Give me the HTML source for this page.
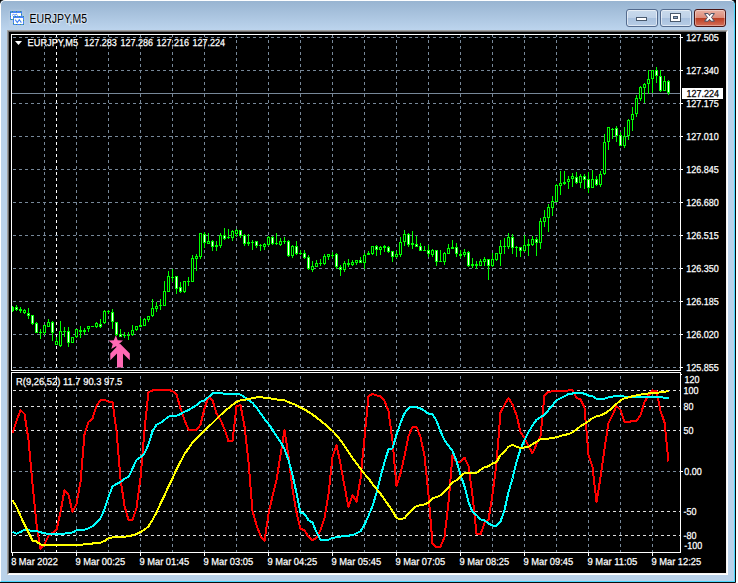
<!DOCTYPE html>
<html><head><meta charset="utf-8"><title>EURJPY,M5</title>
<style>
html,body{margin:0;padding:0;background:#fff;}
body{width:738px;height:583px;overflow:hidden;position:relative;font-family:"Liberation Sans",sans-serif;}
#win{position:absolute;left:-1px;top:-1px;width:735px;height:582px;border:1px solid #0c0c0c;border-radius:6px 6px 0 0;background:#bad2ea;overflow:hidden;}
#hl{position:absolute;left:0;top:0;right:0;bottom:0;border:1px solid #4cd8ff;border-left-color:#ffffff;border-top-color:#fdfeff;border-radius:5px 5px 0 0;}
#tb{position:absolute;left:1px;top:1px;right:1px;height:29px;background:linear-gradient(#98b4d1,#bcd4ed);}
.btn{position:absolute;top:9px;width:30px;height:16px;border:1px solid #546b8e;border-radius:3px;box-shadow:inset 0 0 0 1px rgba(255,255,255,.55);background:linear-gradient(#c9daec 0,#bfd2e8 48%,#a9c1de 52%,#b7cde6 100%);}
#bc{border-color:#4a1515;background:linear-gradient(#e9b0a2 0,#dc8c7a 48%,#bb3d22 52%,#d4705a 100%);box-shadow:inset 0 0 0 1px rgba(255,255,255,.35);}
#client{position:absolute;left:7px;top:30px;width:719px;height:543px;border:1px solid;border-color:#a0a0a0 #fff #fff #a0a0a0;background:#000;}
#client i{position:absolute;left:0;top:0;right:0;bottom:0;border:1px solid;border-color:#696969 #f4f4f4 #f4f4f4 #696969;}
svg{position:absolute;left:0;top:0;}
</style></head><body>
<div style="position:absolute;left:0;top:0;width:736px;height:8px;background:#000"></div>
<div id="win"><div id="tb"></div><div id="hl"></div>
<div class="btn" style="left:626px"></div><div class="btn" style="left:660px"></div><div class="btn" id="bc" style="left:694px"></div>
</div>
<div id="client" style="left:7px;top:30px;position:absolute"><i></i></div>
<svg width="738" height="583" viewBox="0 0 738 583">
<!-- title icon -->
<rect x="8.5" y="9.5" width="17" height="17" rx="3" fill="#fff" opacity="0.08"/>
<g shape-rendering="crispEdges">
<rect x="10.5" y="11.5" width="11" height="8" fill="#fffffa" stroke="#4784f6"/>
<rect x="11" y="12" width="10" height="1" fill="#4784f6"/>
<rect x="10.5" y="11.5" width="11" height="8" fill="none" stroke="#3c9a6e" stroke-dasharray="1 3" stroke-dashoffset="-1"/>
<rect x="13.5" y="16.5" width="10" height="8" fill="#fffffa" stroke="#4784f6"/>
<rect x="14" y="17" width="9" height="1" fill="#4784f6"/>
<rect x="13.5" y="16.5" width="10" height="8" fill="none" stroke="#3c9a6e" stroke-dasharray="1 3" stroke-dashoffset="-1"/>
</g>
<polyline points="12.2,15.2 13.5,14.4 15,15.3 16.2,14.2 17.6,15.4" fill="none" stroke="#4784f6" stroke-width="1"/>
<polyline points="15.2,19.6 17.3,22.6 19.3,19.6 21.4,22.6" fill="none" stroke="#4784f6" stroke-width="1.1"/>
<text x="29.6" y="23.2" font-family="'Liberation Sans', sans-serif" font-size="12.3" fill="#000" textLength="57.4" lengthAdjust="spacingAndGlyphs" style="paint-order:stroke;stroke:rgba(255,255,255,.35);stroke-width:2.5px">EURJPY,M5</text>
<!-- caption button glyphs -->
<g shape-rendering="crispEdges">
<rect x="636.5" y="17.5" width="10" height="3" fill="#fff" stroke="#4a5a6e"/>
<rect x="670.5" y="13.5" width="10" height="8" fill="#fff" stroke="#4a5a6e"/>
<rect x="673.5" y="16.5" width="4" height="2" fill="#8fa6c4" stroke="#4a5a6e"/>
</g>
<path d="M704.6 13.6 L708.2 13.6 L709.5 15.6 L710.8 13.6 L714.4 13.6 L711.5 17.4 L714.4 21.2 L710.8 21.2 L709.5 19.2 L708.2 21.2 L704.6 21.2 L707.5 17.4 Z" fill="#fff" stroke="#474b5e" stroke-width="1" stroke-linejoin="round"/>
<g shape-rendering="crispEdges" stroke-width="1" fill="none">
<line x1="13" y1="37.5" x2="680" y2="37.5" stroke="#778899" stroke-dasharray="3 3" stroke-dashoffset="0"/>
<line x1="13" y1="70.5" x2="680" y2="70.5" stroke="#778899" stroke-dasharray="3 3" stroke-dashoffset="0"/>
<line x1="13" y1="103.5" x2="680" y2="103.5" stroke="#778899" stroke-dasharray="3 3" stroke-dashoffset="0"/>
<line x1="13" y1="136.5" x2="680" y2="136.5" stroke="#778899" stroke-dasharray="3 3" stroke-dashoffset="0"/>
<line x1="13" y1="169.5" x2="680" y2="169.5" stroke="#778899" stroke-dasharray="3 3" stroke-dashoffset="0"/>
<line x1="13" y1="202.5" x2="680" y2="202.5" stroke="#778899" stroke-dasharray="3 3" stroke-dashoffset="0"/>
<line x1="13" y1="235.5" x2="680" y2="235.5" stroke="#778899" stroke-dasharray="3 3" stroke-dashoffset="0"/>
<line x1="13" y1="268.5" x2="680" y2="268.5" stroke="#778899" stroke-dasharray="3 3" stroke-dashoffset="0"/>
<line x1="13" y1="301.5" x2="680" y2="301.5" stroke="#778899" stroke-dasharray="3 3" stroke-dashoffset="0"/>
<line x1="13" y1="334.5" x2="680" y2="334.5" stroke="#778899" stroke-dasharray="3 3" stroke-dashoffset="0"/>
<line x1="13" y1="367.5" x2="680" y2="367.5" stroke="#778899" stroke-dasharray="3 3" stroke-dashoffset="0"/>
<line x1="44.5" y1="35" x2="44.5" y2="370" stroke="#778899" stroke-dasharray="3 3" stroke-dashoffset="1"/>
<line x1="44.5" y1="373" x2="44.5" y2="552" stroke="#778899" stroke-dasharray="3 3" stroke-dashoffset="3"/>
<line x1="76.5" y1="35" x2="76.5" y2="370" stroke="#778899" stroke-dasharray="3 3" stroke-dashoffset="1"/>
<line x1="76.5" y1="373" x2="76.5" y2="552" stroke="#778899" stroke-dasharray="3 3" stroke-dashoffset="3"/>
<line x1="108.5" y1="35" x2="108.5" y2="370" stroke="#778899" stroke-dasharray="3 3" stroke-dashoffset="1"/>
<line x1="108.5" y1="373" x2="108.5" y2="552" stroke="#778899" stroke-dasharray="3 3" stroke-dashoffset="3"/>
<line x1="140.5" y1="35" x2="140.5" y2="370" stroke="#778899" stroke-dasharray="3 3" stroke-dashoffset="1"/>
<line x1="140.5" y1="373" x2="140.5" y2="552" stroke="#778899" stroke-dasharray="3 3" stroke-dashoffset="3"/>
<line x1="172.5" y1="35" x2="172.5" y2="370" stroke="#778899" stroke-dasharray="3 3" stroke-dashoffset="1"/>
<line x1="172.5" y1="373" x2="172.5" y2="552" stroke="#778899" stroke-dasharray="3 3" stroke-dashoffset="3"/>
<line x1="204.5" y1="35" x2="204.5" y2="370" stroke="#778899" stroke-dasharray="3 3" stroke-dashoffset="1"/>
<line x1="204.5" y1="373" x2="204.5" y2="552" stroke="#778899" stroke-dasharray="3 3" stroke-dashoffset="3"/>
<line x1="236.5" y1="35" x2="236.5" y2="370" stroke="#778899" stroke-dasharray="3 3" stroke-dashoffset="1"/>
<line x1="236.5" y1="373" x2="236.5" y2="552" stroke="#778899" stroke-dasharray="3 3" stroke-dashoffset="3"/>
<line x1="268.5" y1="35" x2="268.5" y2="370" stroke="#778899" stroke-dasharray="3 3" stroke-dashoffset="1"/>
<line x1="268.5" y1="373" x2="268.5" y2="552" stroke="#778899" stroke-dasharray="3 3" stroke-dashoffset="3"/>
<line x1="300.5" y1="35" x2="300.5" y2="370" stroke="#778899" stroke-dasharray="3 3" stroke-dashoffset="1"/>
<line x1="300.5" y1="373" x2="300.5" y2="552" stroke="#778899" stroke-dasharray="3 3" stroke-dashoffset="3"/>
<line x1="332.5" y1="35" x2="332.5" y2="370" stroke="#778899" stroke-dasharray="3 3" stroke-dashoffset="1"/>
<line x1="332.5" y1="373" x2="332.5" y2="552" stroke="#778899" stroke-dasharray="3 3" stroke-dashoffset="3"/>
<line x1="364.5" y1="35" x2="364.5" y2="370" stroke="#778899" stroke-dasharray="3 3" stroke-dashoffset="1"/>
<line x1="364.5" y1="373" x2="364.5" y2="552" stroke="#778899" stroke-dasharray="3 3" stroke-dashoffset="3"/>
<line x1="396.5" y1="35" x2="396.5" y2="370" stroke="#778899" stroke-dasharray="3 3" stroke-dashoffset="1"/>
<line x1="396.5" y1="373" x2="396.5" y2="552" stroke="#778899" stroke-dasharray="3 3" stroke-dashoffset="3"/>
<line x1="428.5" y1="35" x2="428.5" y2="370" stroke="#778899" stroke-dasharray="3 3" stroke-dashoffset="1"/>
<line x1="428.5" y1="373" x2="428.5" y2="552" stroke="#778899" stroke-dasharray="3 3" stroke-dashoffset="3"/>
<line x1="460.5" y1="35" x2="460.5" y2="370" stroke="#778899" stroke-dasharray="3 3" stroke-dashoffset="1"/>
<line x1="460.5" y1="373" x2="460.5" y2="552" stroke="#778899" stroke-dasharray="3 3" stroke-dashoffset="3"/>
<line x1="492.5" y1="35" x2="492.5" y2="370" stroke="#778899" stroke-dasharray="3 3" stroke-dashoffset="1"/>
<line x1="492.5" y1="373" x2="492.5" y2="552" stroke="#778899" stroke-dasharray="3 3" stroke-dashoffset="3"/>
<line x1="524.5" y1="35" x2="524.5" y2="370" stroke="#778899" stroke-dasharray="3 3" stroke-dashoffset="1"/>
<line x1="524.5" y1="373" x2="524.5" y2="552" stroke="#778899" stroke-dasharray="3 3" stroke-dashoffset="3"/>
<line x1="556.5" y1="35" x2="556.5" y2="370" stroke="#778899" stroke-dasharray="3 3" stroke-dashoffset="1"/>
<line x1="556.5" y1="373" x2="556.5" y2="552" stroke="#778899" stroke-dasharray="3 3" stroke-dashoffset="3"/>
<line x1="588.5" y1="35" x2="588.5" y2="370" stroke="#778899" stroke-dasharray="3 3" stroke-dashoffset="1"/>
<line x1="588.5" y1="373" x2="588.5" y2="552" stroke="#778899" stroke-dasharray="3 3" stroke-dashoffset="3"/>
<line x1="620.5" y1="35" x2="620.5" y2="370" stroke="#778899" stroke-dasharray="3 3" stroke-dashoffset="1"/>
<line x1="620.5" y1="373" x2="620.5" y2="552" stroke="#778899" stroke-dasharray="3 3" stroke-dashoffset="3"/>
<line x1="652.5" y1="35" x2="652.5" y2="370" stroke="#778899" stroke-dasharray="3 3" stroke-dashoffset="1"/>
<line x1="652.5" y1="373" x2="652.5" y2="552" stroke="#778899" stroke-dasharray="3 3" stroke-dashoffset="3"/>
<line x1="56.5" y1="35" x2="56.5" y2="370" stroke="#ffffff" stroke-dasharray="3 3" stroke-dashoffset="1"/>
<line x1="56.5" y1="373" x2="56.5" y2="552" stroke="#ffffff" stroke-dasharray="3 3" stroke-dashoffset="3"/>
<line x1="13" y1="390.5" x2="680" y2="390.5" stroke="#dedede" stroke-dasharray="3 3" stroke-dashoffset="0"/>
<line x1="13" y1="406.5" x2="680" y2="406.5" stroke="#dedede" stroke-dasharray="3 3" stroke-dashoffset="0"/>
<line x1="13" y1="430.5" x2="680" y2="430.5" stroke="#dedede" stroke-dasharray="3 3" stroke-dashoffset="0"/>
<line x1="13" y1="471.5" x2="680" y2="471.5" stroke="#778899" stroke-dasharray="3 3" stroke-dashoffset="0"/>
<line x1="13" y1="511.5" x2="680" y2="511.5" stroke="#dedede" stroke-dasharray="3 3" stroke-dashoffset="0"/>
<line x1="13" y1="535.5" x2="680" y2="535.5" stroke="#dedede" stroke-dasharray="3 3" stroke-dashoffset="0"/>
<line x1="12" y1="93.5" x2="681" y2="93.5" stroke="#778899"/>
</g>
<g shape-rendering="crispEdges">
<rect x="12" y="306" width="1" height="6" fill="#00ff00"/>
<rect x="11" y="307" width="3" height="4" fill="#00ff00"/>
<rect x="16" y="305" width="1" height="6" fill="#00ff00"/>
<rect x="15" y="307" width="3" height="3" fill="#00ff00"/>
<rect x="16" y="308" width="1" height="1" fill="#fff"/>
<rect x="20" y="307" width="1" height="6" fill="#00ff00"/>
<rect x="19" y="309" width="3" height="2" fill="#00ff00"/>
<rect x="24" y="309" width="1" height="5" fill="#00ff00"/>
<rect x="23" y="310" width="3" height="3" fill="#00ff00"/>
<rect x="24" y="311" width="1" height="1" fill="#000"/>
<rect x="28" y="308" width="1" height="11" fill="#00ff00"/>
<rect x="27" y="313" width="3" height="3" fill="#00ff00"/>
<rect x="28" y="314" width="1" height="1" fill="#fff"/>
<rect x="32" y="315" width="1" height="10" fill="#00ff00"/>
<rect x="31" y="315" width="3" height="9" fill="#00ff00"/>
<rect x="32" y="316" width="1" height="7" fill="#fff"/>
<rect x="36" y="322" width="1" height="11" fill="#00ff00"/>
<rect x="35" y="323" width="3" height="10" fill="#00ff00"/>
<rect x="36" y="324" width="1" height="8" fill="#fff"/>
<rect x="40" y="329" width="1" height="10" fill="#00ff00"/>
<rect x="39" y="332" width="3" height="1" fill="#00ff00"/>
<rect x="44" y="325" width="1" height="10" fill="#00ff00"/>
<rect x="43" y="325" width="3" height="8" fill="#00ff00"/>
<rect x="44" y="326" width="1" height="6" fill="#000"/>
<rect x="48" y="319" width="1" height="8" fill="#00ff00"/>
<rect x="47" y="322" width="3" height="5" fill="#00ff00"/>
<rect x="48" y="323" width="1" height="3" fill="#000"/>
<rect x="52" y="321" width="1" height="20" fill="#00ff00"/>
<rect x="51" y="322" width="3" height="11" fill="#00ff00"/>
<rect x="52" y="323" width="1" height="9" fill="#fff"/>
<rect x="56" y="337" width="1" height="8" fill="#00ff00"/>
<rect x="55" y="341" width="3" height="4" fill="#00ff00"/>
<rect x="56" y="342" width="1" height="2" fill="#000"/>
<rect x="60" y="321" width="1" height="26" fill="#00ff00"/>
<rect x="59" y="331" width="3" height="15" fill="#00ff00"/>
<rect x="60" y="332" width="1" height="13" fill="#000"/>
<rect x="64" y="327" width="1" height="10" fill="#00ff00"/>
<rect x="63" y="331" width="3" height="1" fill="#00ff00"/>
<rect x="68" y="327" width="1" height="20" fill="#00ff00"/>
<rect x="67" y="331" width="3" height="12" fill="#00ff00"/>
<rect x="68" y="332" width="1" height="10" fill="#fff"/>
<rect x="72" y="337" width="1" height="6" fill="#00ff00"/>
<rect x="71" y="337" width="3" height="6" fill="#00ff00"/>
<rect x="72" y="338" width="1" height="4" fill="#000"/>
<rect x="76" y="329" width="1" height="9" fill="#00ff00"/>
<rect x="75" y="329" width="3" height="8" fill="#00ff00"/>
<rect x="76" y="330" width="1" height="6" fill="#000"/>
<rect x="80" y="326" width="1" height="12" fill="#00ff00"/>
<rect x="79" y="330" width="3" height="2" fill="#00ff00"/>
<rect x="84" y="328" width="1" height="7" fill="#00ff00"/>
<rect x="83" y="330" width="3" height="2" fill="#00ff00"/>
<rect x="88" y="326" width="1" height="6" fill="#00ff00"/>
<rect x="87" y="326" width="3" height="3" fill="#00ff00"/>
<rect x="88" y="327" width="1" height="1" fill="#000"/>
<rect x="92" y="326" width="1" height="1" fill="#00ff00"/>
<rect x="91" y="326" width="3" height="1" fill="#00ff00"/>
<rect x="96" y="322" width="1" height="6" fill="#00ff00"/>
<rect x="95" y="323" width="3" height="4" fill="#00ff00"/>
<rect x="96" y="324" width="1" height="2" fill="#000"/>
<rect x="100" y="319" width="1" height="9" fill="#00ff00"/>
<rect x="99" y="324" width="3" height="3" fill="#00ff00"/>
<rect x="100" y="325" width="1" height="1" fill="#fff"/>
<rect x="104" y="310" width="1" height="14" fill="#00ff00"/>
<rect x="103" y="311" width="3" height="12" fill="#00ff00"/>
<rect x="104" y="312" width="1" height="10" fill="#000"/>
<rect x="108" y="310" width="1" height="4" fill="#00ff00"/>
<rect x="107" y="311" width="3" height="1" fill="#00ff00"/>
<rect x="112" y="309" width="1" height="20" fill="#00ff00"/>
<rect x="111" y="312" width="3" height="10" fill="#00ff00"/>
<rect x="112" y="313" width="1" height="8" fill="#fff"/>
<rect x="116" y="322" width="1" height="14" fill="#00ff00"/>
<rect x="115" y="322" width="3" height="13" fill="#00ff00"/>
<rect x="116" y="323" width="1" height="11" fill="#fff"/>
<rect x="120" y="329" width="1" height="8" fill="#00ff00"/>
<rect x="119" y="334" width="3" height="3" fill="#00ff00"/>
<rect x="120" y="335" width="1" height="1" fill="#fff"/>
<rect x="124" y="332" width="1" height="6" fill="#00ff00"/>
<rect x="123" y="335" width="3" height="1" fill="#00ff00"/>
<rect x="128" y="332" width="1" height="8" fill="#00ff00"/>
<rect x="127" y="335" width="3" height="1" fill="#00ff00"/>
<rect x="132" y="325" width="1" height="11" fill="#00ff00"/>
<rect x="131" y="330" width="3" height="5" fill="#00ff00"/>
<rect x="132" y="331" width="1" height="3" fill="#000"/>
<rect x="136" y="326" width="1" height="5" fill="#00ff00"/>
<rect x="135" y="326" width="3" height="4" fill="#00ff00"/>
<rect x="136" y="327" width="1" height="2" fill="#000"/>
<rect x="140" y="318" width="1" height="9" fill="#00ff00"/>
<rect x="139" y="325" width="3" height="2" fill="#00ff00"/>
<rect x="144" y="318" width="1" height="8" fill="#00ff00"/>
<rect x="143" y="319" width="3" height="7" fill="#00ff00"/>
<rect x="144" y="320" width="1" height="5" fill="#000"/>
<rect x="148" y="316" width="1" height="6" fill="#00ff00"/>
<rect x="147" y="316" width="3" height="4" fill="#00ff00"/>
<rect x="148" y="317" width="1" height="2" fill="#000"/>
<rect x="152" y="299" width="1" height="18" fill="#00ff00"/>
<rect x="151" y="308" width="3" height="8" fill="#00ff00"/>
<rect x="152" y="309" width="1" height="6" fill="#000"/>
<rect x="156" y="302" width="1" height="10" fill="#00ff00"/>
<rect x="155" y="306" width="3" height="3" fill="#00ff00"/>
<rect x="156" y="307" width="1" height="1" fill="#000"/>
<rect x="160" y="299" width="1" height="11" fill="#00ff00"/>
<rect x="159" y="305" width="3" height="1" fill="#00ff00"/>
<rect x="164" y="281" width="1" height="25" fill="#00ff00"/>
<rect x="163" y="291" width="3" height="15" fill="#00ff00"/>
<rect x="164" y="292" width="1" height="13" fill="#000"/>
<rect x="168" y="271" width="1" height="21" fill="#00ff00"/>
<rect x="167" y="276" width="3" height="16" fill="#00ff00"/>
<rect x="168" y="277" width="1" height="14" fill="#000"/>
<rect x="172" y="269" width="1" height="13" fill="#00ff00"/>
<rect x="171" y="277" width="3" height="1" fill="#00ff00"/>
<rect x="176" y="276" width="1" height="18" fill="#00ff00"/>
<rect x="175" y="276" width="3" height="13" fill="#00ff00"/>
<rect x="176" y="277" width="1" height="11" fill="#fff"/>
<rect x="180" y="282" width="1" height="11" fill="#00ff00"/>
<rect x="179" y="287" width="3" height="5" fill="#00ff00"/>
<rect x="180" y="288" width="1" height="3" fill="#fff"/>
<rect x="184" y="281" width="1" height="12" fill="#00ff00"/>
<rect x="183" y="281" width="3" height="11" fill="#00ff00"/>
<rect x="184" y="282" width="1" height="9" fill="#000"/>
<rect x="188" y="277" width="1" height="9" fill="#00ff00"/>
<rect x="187" y="281" width="3" height="1" fill="#00ff00"/>
<rect x="192" y="255" width="1" height="27" fill="#00ff00"/>
<rect x="191" y="258" width="3" height="24" fill="#00ff00"/>
<rect x="192" y="259" width="1" height="22" fill="#000"/>
<rect x="196" y="254" width="1" height="17" fill="#00ff00"/>
<rect x="195" y="256" width="3" height="3" fill="#00ff00"/>
<rect x="196" y="257" width="1" height="1" fill="#000"/>
<rect x="200" y="233" width="1" height="26" fill="#00ff00"/>
<rect x="199" y="233" width="3" height="24" fill="#00ff00"/>
<rect x="200" y="234" width="1" height="22" fill="#000"/>
<rect x="204" y="232" width="1" height="16" fill="#00ff00"/>
<rect x="203" y="234" width="3" height="9" fill="#00ff00"/>
<rect x="204" y="235" width="1" height="7" fill="#fff"/>
<rect x="208" y="233" width="1" height="11" fill="#00ff00"/>
<rect x="207" y="241" width="3" height="3" fill="#00ff00"/>
<rect x="208" y="242" width="1" height="1" fill="#000"/>
<rect x="212" y="240" width="1" height="11" fill="#00ff00"/>
<rect x="211" y="241" width="3" height="6" fill="#00ff00"/>
<rect x="212" y="242" width="1" height="4" fill="#fff"/>
<rect x="216" y="241" width="1" height="10" fill="#00ff00"/>
<rect x="215" y="245" width="3" height="2" fill="#00ff00"/>
<rect x="220" y="233" width="1" height="15" fill="#00ff00"/>
<rect x="219" y="235" width="3" height="11" fill="#00ff00"/>
<rect x="220" y="236" width="1" height="9" fill="#000"/>
<rect x="224" y="228" width="1" height="12" fill="#00ff00"/>
<rect x="223" y="235" width="3" height="4" fill="#00ff00"/>
<rect x="224" y="236" width="1" height="2" fill="#fff"/>
<rect x="228" y="229" width="1" height="10" fill="#00ff00"/>
<rect x="227" y="237" width="3" height="1" fill="#00ff00"/>
<rect x="232" y="230" width="1" height="11" fill="#00ff00"/>
<rect x="231" y="231" width="3" height="7" fill="#00ff00"/>
<rect x="232" y="232" width="1" height="5" fill="#000"/>
<rect x="236" y="229" width="1" height="8" fill="#00ff00"/>
<rect x="235" y="230" width="3" height="4" fill="#00ff00"/>
<rect x="236" y="231" width="1" height="2" fill="#000"/>
<rect x="240" y="230" width="1" height="8" fill="#00ff00"/>
<rect x="239" y="230" width="3" height="6" fill="#00ff00"/>
<rect x="240" y="231" width="1" height="4" fill="#fff"/>
<rect x="244" y="234" width="1" height="12" fill="#00ff00"/>
<rect x="243" y="235" width="3" height="9" fill="#00ff00"/>
<rect x="244" y="236" width="1" height="7" fill="#fff"/>
<rect x="248" y="234" width="1" height="12" fill="#00ff00"/>
<rect x="247" y="242" width="3" height="2" fill="#00ff00"/>
<rect x="252" y="240" width="1" height="10" fill="#00ff00"/>
<rect x="251" y="242" width="3" height="1" fill="#00ff00"/>
<rect x="256" y="241" width="1" height="7" fill="#00ff00"/>
<rect x="255" y="241" width="3" height="5" fill="#00ff00"/>
<rect x="256" y="242" width="1" height="3" fill="#fff"/>
<rect x="260" y="244" width="1" height="7" fill="#00ff00"/>
<rect x="259" y="245" width="3" height="1" fill="#00ff00"/>
<rect x="264" y="243" width="1" height="7" fill="#00ff00"/>
<rect x="263" y="244" width="3" height="3" fill="#00ff00"/>
<rect x="264" y="245" width="1" height="1" fill="#000"/>
<rect x="268" y="236" width="1" height="10" fill="#00ff00"/>
<rect x="267" y="237" width="3" height="8" fill="#00ff00"/>
<rect x="268" y="238" width="1" height="6" fill="#000"/>
<rect x="272" y="236" width="1" height="9" fill="#00ff00"/>
<rect x="271" y="237" width="3" height="7" fill="#00ff00"/>
<rect x="272" y="238" width="1" height="5" fill="#fff"/>
<rect x="276" y="233" width="1" height="12" fill="#00ff00"/>
<rect x="275" y="243" width="3" height="1" fill="#00ff00"/>
<rect x="280" y="238" width="1" height="8" fill="#00ff00"/>
<rect x="279" y="241" width="3" height="4" fill="#00ff00"/>
<rect x="280" y="242" width="1" height="2" fill="#000"/>
<rect x="284" y="237" width="1" height="7" fill="#00ff00"/>
<rect x="283" y="241" width="3" height="1" fill="#00ff00"/>
<rect x="288" y="240" width="1" height="17" fill="#00ff00"/>
<rect x="287" y="241" width="3" height="15" fill="#00ff00"/>
<rect x="288" y="242" width="1" height="13" fill="#fff"/>
<rect x="292" y="245" width="1" height="13" fill="#00ff00"/>
<rect x="291" y="246" width="3" height="10" fill="#00ff00"/>
<rect x="292" y="247" width="1" height="8" fill="#000"/>
<rect x="296" y="241" width="1" height="14" fill="#00ff00"/>
<rect x="295" y="246" width="3" height="8" fill="#00ff00"/>
<rect x="296" y="247" width="1" height="6" fill="#fff"/>
<rect x="300" y="250" width="1" height="5" fill="#00ff00"/>
<rect x="299" y="253" width="3" height="1" fill="#00ff00"/>
<rect x="304" y="250" width="1" height="9" fill="#00ff00"/>
<rect x="303" y="253" width="3" height="5" fill="#00ff00"/>
<rect x="304" y="254" width="1" height="3" fill="#fff"/>
<rect x="308" y="255" width="1" height="15" fill="#00ff00"/>
<rect x="307" y="257" width="3" height="12" fill="#00ff00"/>
<rect x="308" y="258" width="1" height="10" fill="#fff"/>
<rect x="312" y="261" width="1" height="11" fill="#00ff00"/>
<rect x="311" y="266" width="3" height="4" fill="#00ff00"/>
<rect x="312" y="267" width="1" height="2" fill="#000"/>
<rect x="316" y="260" width="1" height="7" fill="#00ff00"/>
<rect x="315" y="263" width="3" height="4" fill="#00ff00"/>
<rect x="316" y="264" width="1" height="2" fill="#000"/>
<rect x="320" y="259" width="1" height="7" fill="#00ff00"/>
<rect x="319" y="263" width="3" height="1" fill="#00ff00"/>
<rect x="324" y="254" width="1" height="11" fill="#00ff00"/>
<rect x="323" y="256" width="3" height="8" fill="#00ff00"/>
<rect x="324" y="257" width="1" height="6" fill="#000"/>
<rect x="328" y="254" width="1" height="6" fill="#00ff00"/>
<rect x="327" y="254" width="3" height="3" fill="#00ff00"/>
<rect x="328" y="255" width="1" height="1" fill="#000"/>
<rect x="332" y="252" width="1" height="6" fill="#00ff00"/>
<rect x="331" y="255" width="3" height="1" fill="#00ff00"/>
<rect x="336" y="253" width="1" height="16" fill="#00ff00"/>
<rect x="335" y="254" width="3" height="13" fill="#00ff00"/>
<rect x="336" y="255" width="1" height="11" fill="#fff"/>
<rect x="340" y="265" width="1" height="11" fill="#00ff00"/>
<rect x="339" y="267" width="3" height="3" fill="#00ff00"/>
<rect x="340" y="268" width="1" height="1" fill="#fff"/>
<rect x="344" y="261" width="1" height="11" fill="#00ff00"/>
<rect x="343" y="263" width="3" height="7" fill="#00ff00"/>
<rect x="344" y="264" width="1" height="5" fill="#000"/>
<rect x="348" y="259" width="1" height="8" fill="#00ff00"/>
<rect x="347" y="263" width="3" height="2" fill="#00ff00"/>
<rect x="352" y="260" width="1" height="6" fill="#00ff00"/>
<rect x="351" y="262" width="3" height="3" fill="#00ff00"/>
<rect x="352" y="263" width="1" height="1" fill="#000"/>
<rect x="356" y="260" width="1" height="5" fill="#00ff00"/>
<rect x="355" y="260" width="3" height="3" fill="#00ff00"/>
<rect x="356" y="261" width="1" height="1" fill="#000"/>
<rect x="360" y="257" width="1" height="6" fill="#00ff00"/>
<rect x="359" y="260" width="3" height="3" fill="#00ff00"/>
<rect x="360" y="261" width="1" height="1" fill="#fff"/>
<rect x="364" y="253" width="1" height="16" fill="#00ff00"/>
<rect x="363" y="255" width="3" height="8" fill="#00ff00"/>
<rect x="364" y="256" width="1" height="6" fill="#000"/>
<rect x="368" y="251" width="1" height="4" fill="#00ff00"/>
<rect x="367" y="253" width="3" height="2" fill="#00ff00"/>
<rect x="372" y="246" width="1" height="9" fill="#00ff00"/>
<rect x="371" y="246" width="3" height="8" fill="#00ff00"/>
<rect x="372" y="247" width="1" height="6" fill="#000"/>
<rect x="376" y="245" width="1" height="11" fill="#00ff00"/>
<rect x="375" y="246" width="3" height="4" fill="#00ff00"/>
<rect x="376" y="247" width="1" height="2" fill="#fff"/>
<rect x="380" y="246" width="1" height="9" fill="#00ff00"/>
<rect x="379" y="247" width="3" height="3" fill="#00ff00"/>
<rect x="380" y="248" width="1" height="1" fill="#000"/>
<rect x="384" y="245" width="1" height="7" fill="#00ff00"/>
<rect x="383" y="246" width="3" height="2" fill="#00ff00"/>
<rect x="388" y="246" width="1" height="7" fill="#00ff00"/>
<rect x="387" y="247" width="3" height="5" fill="#00ff00"/>
<rect x="388" y="248" width="1" height="3" fill="#fff"/>
<rect x="392" y="251" width="1" height="11" fill="#00ff00"/>
<rect x="391" y="251" width="3" height="6" fill="#00ff00"/>
<rect x="392" y="252" width="1" height="4" fill="#fff"/>
<rect x="396" y="251" width="1" height="7" fill="#00ff00"/>
<rect x="395" y="254" width="3" height="3" fill="#00ff00"/>
<rect x="396" y="255" width="1" height="1" fill="#000"/>
<rect x="400" y="237" width="1" height="20" fill="#00ff00"/>
<rect x="399" y="242" width="3" height="13" fill="#00ff00"/>
<rect x="400" y="243" width="1" height="11" fill="#000"/>
<rect x="404" y="230" width="1" height="16" fill="#00ff00"/>
<rect x="403" y="234" width="3" height="8" fill="#00ff00"/>
<rect x="404" y="235" width="1" height="6" fill="#000"/>
<rect x="408" y="233" width="1" height="14" fill="#00ff00"/>
<rect x="407" y="234" width="3" height="11" fill="#00ff00"/>
<rect x="408" y="235" width="1" height="9" fill="#fff"/>
<rect x="412" y="231" width="1" height="18" fill="#00ff00"/>
<rect x="411" y="243" width="3" height="2" fill="#00ff00"/>
<rect x="416" y="236" width="1" height="11" fill="#00ff00"/>
<rect x="415" y="244" width="3" height="3" fill="#00ff00"/>
<rect x="416" y="245" width="1" height="1" fill="#fff"/>
<rect x="420" y="243" width="1" height="8" fill="#00ff00"/>
<rect x="419" y="246" width="3" height="5" fill="#00ff00"/>
<rect x="420" y="247" width="1" height="3" fill="#fff"/>
<rect x="424" y="246" width="1" height="5" fill="#00ff00"/>
<rect x="423" y="250" width="3" height="1" fill="#00ff00"/>
<rect x="428" y="245" width="1" height="12" fill="#00ff00"/>
<rect x="427" y="250" width="3" height="4" fill="#00ff00"/>
<rect x="428" y="251" width="1" height="2" fill="#fff"/>
<rect x="432" y="249" width="1" height="8" fill="#00ff00"/>
<rect x="431" y="250" width="3" height="5" fill="#00ff00"/>
<rect x="432" y="251" width="1" height="3" fill="#000"/>
<rect x="436" y="250" width="1" height="16" fill="#00ff00"/>
<rect x="435" y="250" width="3" height="12" fill="#00ff00"/>
<rect x="436" y="251" width="1" height="10" fill="#fff"/>
<rect x="440" y="250" width="1" height="12" fill="#00ff00"/>
<rect x="439" y="261" width="3" height="1" fill="#00ff00"/>
<rect x="444" y="252" width="1" height="13" fill="#00ff00"/>
<rect x="443" y="253" width="3" height="9" fill="#00ff00"/>
<rect x="444" y="254" width="1" height="7" fill="#000"/>
<rect x="448" y="244" width="1" height="10" fill="#00ff00"/>
<rect x="447" y="248" width="3" height="6" fill="#00ff00"/>
<rect x="448" y="249" width="1" height="4" fill="#000"/>
<rect x="452" y="240" width="1" height="9" fill="#00ff00"/>
<rect x="451" y="247" width="3" height="2" fill="#00ff00"/>
<rect x="456" y="243" width="1" height="14" fill="#00ff00"/>
<rect x="455" y="247" width="3" height="7" fill="#00ff00"/>
<rect x="456" y="248" width="1" height="5" fill="#fff"/>
<rect x="460" y="250" width="1" height="8" fill="#00ff00"/>
<rect x="459" y="254" width="3" height="2" fill="#00ff00"/>
<rect x="464" y="249" width="1" height="8" fill="#00ff00"/>
<rect x="463" y="252" width="3" height="3" fill="#00ff00"/>
<rect x="464" y="253" width="1" height="1" fill="#000"/>
<rect x="468" y="251" width="1" height="16" fill="#00ff00"/>
<rect x="467" y="252" width="3" height="14" fill="#00ff00"/>
<rect x="468" y="253" width="1" height="12" fill="#fff"/>
<rect x="472" y="258" width="1" height="10" fill="#00ff00"/>
<rect x="471" y="264" width="3" height="2" fill="#00ff00"/>
<rect x="476" y="261" width="1" height="8" fill="#00ff00"/>
<rect x="475" y="264" width="3" height="2" fill="#00ff00"/>
<rect x="480" y="259" width="1" height="7" fill="#00ff00"/>
<rect x="479" y="261" width="3" height="5" fill="#00ff00"/>
<rect x="480" y="262" width="1" height="3" fill="#000"/>
<rect x="484" y="257" width="1" height="9" fill="#00ff00"/>
<rect x="483" y="259" width="3" height="3" fill="#00ff00"/>
<rect x="484" y="260" width="1" height="1" fill="#000"/>
<rect x="488" y="259" width="1" height="21" fill="#00ff00"/>
<rect x="487" y="259" width="3" height="7" fill="#00ff00"/>
<rect x="488" y="260" width="1" height="5" fill="#fff"/>
<rect x="492" y="253" width="1" height="14" fill="#00ff00"/>
<rect x="491" y="259" width="3" height="7" fill="#00ff00"/>
<rect x="492" y="260" width="1" height="5" fill="#000"/>
<rect x="496" y="253" width="1" height="8" fill="#00ff00"/>
<rect x="495" y="253" width="3" height="7" fill="#00ff00"/>
<rect x="496" y="254" width="1" height="5" fill="#000"/>
<rect x="500" y="240" width="1" height="26" fill="#00ff00"/>
<rect x="499" y="246" width="3" height="8" fill="#00ff00"/>
<rect x="500" y="247" width="1" height="6" fill="#000"/>
<rect x="504" y="238" width="1" height="16" fill="#00ff00"/>
<rect x="503" y="246" width="3" height="1" fill="#00ff00"/>
<rect x="508" y="233" width="1" height="16" fill="#00ff00"/>
<rect x="507" y="237" width="3" height="10" fill="#00ff00"/>
<rect x="508" y="238" width="1" height="8" fill="#000"/>
<rect x="512" y="234" width="1" height="20" fill="#00ff00"/>
<rect x="511" y="237" width="3" height="11" fill="#00ff00"/>
<rect x="512" y="238" width="1" height="9" fill="#fff"/>
<rect x="516" y="246" width="1" height="11" fill="#00ff00"/>
<rect x="515" y="247" width="3" height="1" fill="#00ff00"/>
<rect x="520" y="247" width="1" height="10" fill="#00ff00"/>
<rect x="519" y="247" width="3" height="4" fill="#00ff00"/>
<rect x="520" y="248" width="1" height="2" fill="#fff"/>
<rect x="524" y="235" width="1" height="17" fill="#00ff00"/>
<rect x="523" y="245" width="3" height="6" fill="#00ff00"/>
<rect x="524" y="246" width="1" height="4" fill="#000"/>
<rect x="528" y="239" width="1" height="17" fill="#00ff00"/>
<rect x="527" y="244" width="3" height="2" fill="#00ff00"/>
<rect x="532" y="236" width="1" height="10" fill="#00ff00"/>
<rect x="531" y="239" width="3" height="6" fill="#00ff00"/>
<rect x="532" y="240" width="1" height="4" fill="#000"/>
<rect x="536" y="237" width="1" height="19" fill="#00ff00"/>
<rect x="535" y="239" width="3" height="4" fill="#00ff00"/>
<rect x="536" y="240" width="1" height="2" fill="#fff"/>
<rect x="540" y="218" width="1" height="31" fill="#00ff00"/>
<rect x="539" y="221" width="3" height="22" fill="#00ff00"/>
<rect x="540" y="222" width="1" height="20" fill="#000"/>
<rect x="544" y="210" width="1" height="17" fill="#00ff00"/>
<rect x="543" y="217" width="3" height="5" fill="#00ff00"/>
<rect x="544" y="218" width="1" height="3" fill="#000"/>
<rect x="548" y="204" width="1" height="28" fill="#00ff00"/>
<rect x="547" y="207" width="3" height="11" fill="#00ff00"/>
<rect x="548" y="208" width="1" height="9" fill="#000"/>
<rect x="552" y="196" width="1" height="20" fill="#00ff00"/>
<rect x="551" y="201" width="3" height="7" fill="#00ff00"/>
<rect x="552" y="202" width="1" height="5" fill="#000"/>
<rect x="556" y="184" width="1" height="18" fill="#00ff00"/>
<rect x="555" y="185" width="3" height="17" fill="#00ff00"/>
<rect x="556" y="186" width="1" height="15" fill="#000"/>
<rect x="560" y="171" width="1" height="24" fill="#00ff00"/>
<rect x="559" y="183" width="3" height="3" fill="#00ff00"/>
<rect x="560" y="184" width="1" height="1" fill="#000"/>
<rect x="564" y="171" width="1" height="14" fill="#00ff00"/>
<rect x="563" y="182" width="3" height="2" fill="#00ff00"/>
<rect x="568" y="176" width="1" height="13" fill="#00ff00"/>
<rect x="567" y="179" width="3" height="3" fill="#00ff00"/>
<rect x="568" y="180" width="1" height="1" fill="#000"/>
<rect x="572" y="173" width="1" height="14" fill="#00ff00"/>
<rect x="571" y="176" width="3" height="3" fill="#00ff00"/>
<rect x="572" y="177" width="1" height="1" fill="#000"/>
<rect x="576" y="172" width="1" height="12" fill="#00ff00"/>
<rect x="575" y="177" width="3" height="6" fill="#00ff00"/>
<rect x="576" y="178" width="1" height="4" fill="#fff"/>
<rect x="580" y="174" width="1" height="14" fill="#00ff00"/>
<rect x="579" y="176" width="3" height="7" fill="#00ff00"/>
<rect x="580" y="177" width="1" height="5" fill="#000"/>
<rect x="584" y="174" width="1" height="15" fill="#00ff00"/>
<rect x="583" y="176" width="3" height="4" fill="#00ff00"/>
<rect x="584" y="177" width="1" height="2" fill="#fff"/>
<rect x="588" y="172" width="1" height="21" fill="#00ff00"/>
<rect x="587" y="179" width="3" height="9" fill="#00ff00"/>
<rect x="588" y="180" width="1" height="7" fill="#fff"/>
<rect x="592" y="170" width="1" height="18" fill="#00ff00"/>
<rect x="591" y="179" width="3" height="9" fill="#00ff00"/>
<rect x="592" y="180" width="1" height="7" fill="#000"/>
<rect x="596" y="176" width="1" height="10" fill="#00ff00"/>
<rect x="595" y="179" width="3" height="6" fill="#00ff00"/>
<rect x="596" y="180" width="1" height="4" fill="#fff"/>
<rect x="600" y="171" width="1" height="16" fill="#00ff00"/>
<rect x="599" y="174" width="3" height="11" fill="#00ff00"/>
<rect x="600" y="175" width="1" height="9" fill="#000"/>
<rect x="604" y="134" width="1" height="41" fill="#00ff00"/>
<rect x="603" y="142" width="3" height="32" fill="#00ff00"/>
<rect x="604" y="143" width="1" height="30" fill="#000"/>
<rect x="608" y="127" width="1" height="23" fill="#00ff00"/>
<rect x="607" y="127" width="3" height="15" fill="#00ff00"/>
<rect x="608" y="128" width="1" height="13" fill="#000"/>
<rect x="612" y="128" width="1" height="11" fill="#00ff00"/>
<rect x="611" y="129" width="3" height="1" fill="#00ff00"/>
<rect x="616" y="126" width="1" height="16" fill="#00ff00"/>
<rect x="615" y="128" width="3" height="8" fill="#00ff00"/>
<rect x="616" y="129" width="1" height="6" fill="#fff"/>
<rect x="620" y="132" width="1" height="14" fill="#00ff00"/>
<rect x="619" y="135" width="3" height="11" fill="#00ff00"/>
<rect x="620" y="136" width="1" height="9" fill="#fff"/>
<rect x="624" y="127" width="1" height="21" fill="#00ff00"/>
<rect x="623" y="136" width="3" height="10" fill="#00ff00"/>
<rect x="624" y="137" width="1" height="8" fill="#000"/>
<rect x="628" y="119" width="1" height="21" fill="#00ff00"/>
<rect x="627" y="120" width="3" height="16" fill="#00ff00"/>
<rect x="628" y="121" width="1" height="14" fill="#000"/>
<rect x="632" y="107" width="1" height="24" fill="#00ff00"/>
<rect x="631" y="114" width="3" height="6" fill="#00ff00"/>
<rect x="632" y="115" width="1" height="4" fill="#000"/>
<rect x="636" y="95" width="1" height="22" fill="#00ff00"/>
<rect x="635" y="98" width="3" height="16" fill="#00ff00"/>
<rect x="636" y="99" width="1" height="14" fill="#000"/>
<rect x="640" y="86" width="1" height="15" fill="#00ff00"/>
<rect x="639" y="87" width="3" height="12" fill="#00ff00"/>
<rect x="640" y="88" width="1" height="10" fill="#000"/>
<rect x="644" y="83" width="1" height="20" fill="#00ff00"/>
<rect x="643" y="84" width="3" height="4" fill="#00ff00"/>
<rect x="644" y="85" width="1" height="2" fill="#000"/>
<rect x="648" y="70" width="1" height="24" fill="#00ff00"/>
<rect x="647" y="79" width="3" height="5" fill="#00ff00"/>
<rect x="648" y="80" width="1" height="3" fill="#000"/>
<rect x="652" y="70" width="1" height="23" fill="#00ff00"/>
<rect x="651" y="70" width="3" height="9" fill="#00ff00"/>
<rect x="652" y="71" width="1" height="7" fill="#000"/>
<rect x="656" y="67" width="1" height="16" fill="#00ff00"/>
<rect x="655" y="70" width="3" height="6" fill="#00ff00"/>
<rect x="656" y="71" width="1" height="4" fill="#fff"/>
<rect x="660" y="70" width="1" height="22" fill="#00ff00"/>
<rect x="659" y="76" width="3" height="15" fill="#00ff00"/>
<rect x="660" y="77" width="1" height="13" fill="#fff"/>
<rect x="664" y="76" width="1" height="15" fill="#00ff00"/>
<rect x="663" y="81" width="3" height="10" fill="#00ff00"/>
<rect x="664" y="82" width="1" height="8" fill="#000"/>
<rect x="668" y="80" width="1" height="15" fill="#00ff00"/>
<rect x="667" y="81" width="3" height="12" fill="#00ff00"/>
<rect x="668" y="82" width="1" height="10" fill="#fff"/>
</g>
<polygon points="115.8,335.3 117.7,340.2 123.0,340.6 118.9,343.9 120.3,349.0 115.8,346.2 111.3,349.0 112.7,343.9 108.6,340.6 113.9,340.2" fill="#ff69b4"/>
<polygon points="119.8,343.5 129.8,353.5 129.8,360.2 123,353.5 123,367.5 117,367.5 117,353.5 110.3,360.2 110.3,353.5" fill="#ff69b4"/>
<clipPath id="ic"><rect x="12" y="373" width="668" height="179"/></clipPath><g clip-path="url(#ic)">
<polyline points="12.5,433.0 16.5,421.0 20.5,410.0 24.5,414.0 28.5,440.0 32.5,484.0 36.5,524.0 40.5,549.0 44.5,544.0 48.5,536.0 52.5,533.0 56.5,530.0 60.5,512.0 64.5,490.0 68.5,495.0 72.5,512.0 76.5,504.0 80.5,482.0 84.5,434.5 88.5,422.0 92.5,418.5 96.5,406.0 100.5,400.0 104.5,400.0 108.5,401.6 112.5,402.0 116.5,431.0 120.5,479.0 124.5,506.0 128.5,520.0 132.5,520.0 136.5,508.0 140.5,478.0 144.5,430.0 148.5,392.0 152.5,390.5 156.5,390.0 160.5,390.0 164.5,390.0 168.5,390.0 172.5,391.0 176.5,394.6 180.5,408.4 184.5,420.0 188.5,429.6 192.5,430.0 196.5,430.0 200.5,424.7 204.5,408.4 208.5,396.7 212.5,400.3 216.5,413.3 220.5,420.0 224.5,429.0 228.5,441.4 232.5,441.4 236.5,406.0 240.5,405.2 244.5,426.4 248.5,462.0 252.5,511.0 256.5,525.0 260.5,536.0 264.5,541.0 268.5,514.0 272.5,496.0 276.5,480.0 280.5,455.0 284.5,430.4 288.5,456.0 292.5,489.0 296.5,512.5 300.5,529.0 304.5,530.0 308.5,537.0 312.5,540.0 316.5,538.0 320.5,530.0 324.5,518.0 328.5,494.0 332.5,457.0 336.5,445.0 340.5,464.0 344.5,486.0 348.5,507.0 352.5,495.0 356.5,501.5 360.5,479.0 364.5,438.0 368.5,396.0 372.5,394.0 376.5,395.4 380.5,396.2 384.5,401.0 388.5,411.0 392.5,441.0 396.5,486.0 400.5,473.5 404.5,456.0 408.5,436.0 412.5,427.0 416.5,426.7 420.5,437.0 424.5,456.0 428.5,494.6 432.5,543.5 436.5,547.5 440.5,546.7 444.5,537.0 448.5,502.7 452.5,455.0 456.5,462.0 460.5,462.0 464.5,457.7 468.5,466.0 472.5,495.5 476.5,533.7 480.5,534.5 484.5,523.0 488.5,520.0 492.5,494.6 496.5,463.0 500.5,412.5 504.5,405.0 508.5,398.0 512.5,404.4 516.5,415.0 520.5,432.0 524.5,438.0 528.5,446.0 532.5,453.3 536.5,444.3 540.5,436.0 544.5,395.4 548.5,391.8 552.5,391.3 556.5,391.0 560.5,391.0 564.5,390.8 568.5,390.5 572.5,390.3 576.5,398.0 580.5,399.5 584.5,407.6 588.5,455.0 592.5,467.0 596.5,502.0 600.5,477.5 604.5,449.0 608.5,423.0 612.5,415.0 616.5,406.0 620.5,410.0 624.5,422.3 628.5,421.8 632.5,421.2 636.5,421.2 640.5,415.0 644.5,402.0 648.5,395.4 652.5,390.5 656.5,391.3 660.5,411.0 664.5,422.3 668.5,461.4" fill="none" stroke="#ff0000" stroke-width="2" stroke-linejoin="round" shape-rendering="crispEdges"/>
<polyline points="12.5,531.7 16.5,533.7 20.5,532.0 24.5,529.6 28.5,530.2 32.5,531.0 36.5,531.0 40.5,532.2 44.5,533.3 48.5,533.8 52.5,533.8 56.5,533.8 60.5,533.8 64.5,533.6 68.5,533.0 72.5,532.5 76.5,530.3 80.5,529.8 84.5,529.8 88.5,528.2 92.5,526.4 96.5,522.6 100.5,518.2 104.5,509.3 108.5,497.0 112.5,486.4 116.5,484.0 120.5,481.9 124.5,478.6 128.5,477.0 132.5,468.7 136.5,459.8 140.5,457.3 144.5,453.3 148.5,444.3 152.5,431.3 156.5,424.7 160.5,422.8 164.5,419.8 168.5,416.6 172.5,415.8 176.5,415.8 180.5,414.1 184.5,411.7 188.5,410.1 192.5,407.6 196.5,405.2 200.5,401.6 204.5,400.3 208.5,397.0 212.5,393.5 216.5,393.0 220.5,393.0 224.5,393.8 228.5,394.1 232.5,394.1 236.5,394.1 240.5,394.6 244.5,397.0 248.5,400.3 252.5,402.7 256.5,407.6 260.5,413.3 264.5,419.0 268.5,423.9 272.5,429.6 276.5,436.1 280.5,441.8 284.5,449.2 288.5,460.0 292.5,475.0 296.5,493.0 300.5,512.5 304.5,513.8 308.5,520.3 312.5,522.6 316.5,532.1 320.5,539.9 324.5,539.9 328.5,539.9 332.5,537.8 336.5,537.3 340.5,536.6 344.5,536.1 348.5,535.7 352.5,535.0 356.5,533.4 360.5,531.3 364.5,524.7 368.5,515.8 372.5,506.0 376.5,493.0 380.5,477.0 384.5,462.2 388.5,449.2 392.5,448.4 396.5,434.5 400.5,423.1 404.5,413.3 408.5,408.1 412.5,406.8 416.5,407.3 420.5,408.4 424.5,410.9 428.5,413.7 432.5,414.1 436.5,420.7 440.5,431.3 444.5,440.2 448.5,445.6 452.5,450.8 456.5,461.0 460.5,474.7 464.5,486.4 468.5,501.9 472.5,512.0 476.5,515.0 480.5,519.4 484.5,520.3 488.5,523.6 492.5,525.5 496.5,525.9 500.5,521.5 504.5,510.0 508.5,492.1 512.5,478.5 516.5,462.0 520.5,449.2 524.5,440.2 528.5,432.1 532.5,425.6 536.5,419.8 540.5,417.1 544.5,415.0 548.5,410.1 552.5,405.2 556.5,400.3 560.5,398.3 564.5,396.2 568.5,394.1 572.5,393.5 576.5,393.0 580.5,393.0 584.5,393.7 588.5,395.5 592.5,396.2 596.5,398.7 600.5,399.0 604.5,398.7 608.5,397.4 612.5,396.7 616.5,395.7 620.5,395.7 624.5,396.7 628.5,396.7 632.5,396.7 636.5,396.7 640.5,396.7 644.5,396.7 648.5,396.7 652.5,396.7 656.5,396.7 660.5,396.7 664.5,397.9 668.5,397.9" fill="none" stroke="#00ffff" stroke-width="2" stroke-linejoin="round" shape-rendering="crispEdges"/>
<polyline points="12.5,500.3 16.5,506.8 20.5,515.8 24.5,524.7 28.5,532.5 32.5,540.5 36.5,541.5 40.5,544.5 44.5,545.0 48.5,545.0 52.5,545.0 56.5,545.0 60.5,545.0 64.5,545.0 68.5,545.0 72.5,545.0 76.5,545.0 80.5,544.8 84.5,544.4 88.5,543.5 92.5,543.5 96.5,543.1 100.5,542.7 104.5,541.0 108.5,538.3 112.5,537.3 116.5,537.0 120.5,537.0 124.5,536.8 128.5,536.1 132.5,535.3 136.5,534.0 140.5,532.1 144.5,529.6 148.5,526.4 152.5,519.8 156.5,512.5 160.5,503.6 164.5,495.4 168.5,486.4 172.5,478.5 176.5,469.4 180.5,461.7 184.5,454.1 188.5,448.4 192.5,442.7 196.5,438.6 200.5,434.2 204.5,430.4 208.5,426.7 212.5,423.1 216.5,419.0 220.5,415.0 224.5,411.4 228.5,408.1 232.5,404.9 236.5,401.9 240.5,400.3 244.5,399.8 248.5,399.0 252.5,398.3 256.5,397.4 260.5,397.0 264.5,397.9 268.5,398.2 272.5,398.7 276.5,399.5 280.5,399.8 284.5,400.3 288.5,402.2 292.5,403.6 296.5,405.2 300.5,407.6 304.5,409.3 308.5,412.0 312.5,414.6 316.5,417.4 320.5,420.7 324.5,423.9 328.5,427.7 332.5,430.9 336.5,435.3 340.5,440.2 344.5,445.9 348.5,452.1 352.5,458.1 356.5,463.3 360.5,468.6 364.5,473.9 368.5,478.4 372.5,484.0 376.5,488.9 380.5,493.8 384.5,499.5 388.5,505.2 392.5,510.9 396.5,518.2 400.5,519.0 404.5,518.2 408.5,513.3 412.5,509.3 416.5,506.0 420.5,505.2 424.5,504.4 428.5,502.4 432.5,498.2 436.5,497.0 440.5,495.4 444.5,491.3 448.5,487.3 452.5,482.4 456.5,480.2 460.5,476.6 464.5,473.0 468.5,473.0 472.5,473.0 476.5,472.8 480.5,470.0 484.5,467.1 488.5,466.3 492.5,463.5 496.5,462.2 500.5,454.9 504.5,451.6 508.5,446.7 512.5,444.6 516.5,446.7 520.5,447.9 524.5,447.5 528.5,446.7 532.5,444.3 536.5,441.8 540.5,439.1 544.5,438.6 548.5,438.6 552.5,438.1 556.5,437.0 560.5,436.1 564.5,434.8 568.5,434.2 572.5,432.4 576.5,429.6 580.5,426.2 584.5,423.9 588.5,421.2 592.5,418.2 596.5,416.3 600.5,415.3 604.5,413.7 608.5,410.9 612.5,407.6 616.5,403.9 620.5,400.3 624.5,398.3 628.5,397.4 632.5,396.2 636.5,395.4 640.5,394.6 644.5,393.8 648.5,393.5 652.5,393.0 656.5,393.0 660.5,392.1 664.5,391.7 668.5,391.3" fill="none" stroke="#ffff00" stroke-width="2" stroke-linejoin="round" shape-rendering="crispEdges"/>
</g>
<g shape-rendering="crispEdges" stroke="#fff" stroke-width="1" fill="none">
<rect x="11.5" y="34.5" width="669" height="336"/>
<rect x="11.5" y="372.5" width="669" height="180"/>
<line x1="681" y1="37.5" x2="683" y2="37.5"/>
<line x1="681" y1="70.5" x2="683" y2="70.5"/>
<line x1="681" y1="103.5" x2="683" y2="103.5"/>
<line x1="681" y1="136.5" x2="683" y2="136.5"/>
<line x1="681" y1="169.5" x2="683" y2="169.5"/>
<line x1="681" y1="202.5" x2="683" y2="202.5"/>
<line x1="681" y1="235.5" x2="683" y2="235.5"/>
<line x1="681" y1="268.5" x2="683" y2="268.5"/>
<line x1="681" y1="301.5" x2="683" y2="301.5"/>
<line x1="681" y1="334.5" x2="683" y2="334.5"/>
<line x1="681" y1="367.5" x2="683" y2="367.5"/>
<line x1="681" y1="374.5" x2="682" y2="374.5"/>
<line x1="681" y1="471.5" x2="683" y2="471.5"/>
<line x1="12.5" y1="553" x2="12.5" y2="556"/>
<line x1="76.5" y1="553" x2="76.5" y2="556"/>
<line x1="140.5" y1="553" x2="140.5" y2="556"/>
<line x1="204.5" y1="553" x2="204.5" y2="556"/>
<line x1="268.5" y1="553" x2="268.5" y2="556"/>
<line x1="332.5" y1="553" x2="332.5" y2="556"/>
<line x1="396.5" y1="553" x2="396.5" y2="556"/>
<line x1="460.5" y1="553" x2="460.5" y2="556"/>
<line x1="524.5" y1="553" x2="524.5" y2="556"/>
<line x1="588.5" y1="553" x2="588.5" y2="556"/>
<line x1="652.5" y1="553" x2="652.5" y2="556"/>
</g>
<rect x="682" y="88" width="41" height="11" fill="#fff" shape-rendering="crispEdges"/>
<polygon points="15,41 22,41 18.5,45" fill="#fff"/>
<g font-family="'Liberation Sans', sans-serif" text-rendering="geometricPrecision" xml:space="preserve">
<text x="27.6" y="46" fill="#fff" stroke="#fff" stroke-width="0.25" font-size="10.1" textLength="50.5" lengthAdjust="spacingAndGlyphs">EURJPY,M5</text>
<text x="84.3" y="46" fill="#fff" stroke="#fff" stroke-width="0.25" font-size="10.1" textLength="32.5" lengthAdjust="spacingAndGlyphs">127.283</text>
<text x="120.4" y="46" fill="#fff" stroke="#fff" stroke-width="0.25" font-size="10.1" textLength="32.5" lengthAdjust="spacingAndGlyphs">127.286</text>
<text x="156.5" y="46" fill="#fff" stroke="#fff" stroke-width="0.25" font-size="10.1" textLength="32.5" lengthAdjust="spacingAndGlyphs">127.216</text>
<text x="192.60000000000002" y="46" fill="#fff" stroke="#fff" stroke-width="0.25" font-size="10.1" textLength="32.5" lengthAdjust="spacingAndGlyphs">127.224</text>
<text x="16.1" y="385" fill="#fff" stroke="#fff" stroke-width="0.25" font-size="10.1" textLength="106.2" lengthAdjust="spacingAndGlyphs">R(9,26,52) 11.7 90.3 97.5</text>
<text x="686.3" y="41" fill="#fff" stroke="#fff" stroke-width="0.25" font-size="10.1" textLength="32.5" lengthAdjust="spacingAndGlyphs">127.505</text>
<text x="686.3" y="74" fill="#fff" stroke="#fff" stroke-width="0.25" font-size="10.1" textLength="32.5" lengthAdjust="spacingAndGlyphs">127.340</text>
<text x="686.3" y="107" fill="#fff" stroke="#fff" stroke-width="0.25" font-size="10.1" textLength="32.5" lengthAdjust="spacingAndGlyphs">127.175</text>
<text x="686.3" y="140" fill="#fff" stroke="#fff" stroke-width="0.25" font-size="10.1" textLength="32.5" lengthAdjust="spacingAndGlyphs">127.010</text>
<text x="686.3" y="173" fill="#fff" stroke="#fff" stroke-width="0.25" font-size="10.1" textLength="32.5" lengthAdjust="spacingAndGlyphs">126.845</text>
<text x="686.3" y="206" fill="#fff" stroke="#fff" stroke-width="0.25" font-size="10.1" textLength="32.5" lengthAdjust="spacingAndGlyphs">126.680</text>
<text x="686.3" y="239" fill="#fff" stroke="#fff" stroke-width="0.25" font-size="10.1" textLength="32.5" lengthAdjust="spacingAndGlyphs">126.515</text>
<text x="686.3" y="272" fill="#fff" stroke="#fff" stroke-width="0.25" font-size="10.1" textLength="32.5" lengthAdjust="spacingAndGlyphs">126.350</text>
<text x="686.3" y="305" fill="#fff" stroke="#fff" stroke-width="0.25" font-size="10.1" textLength="32.5" lengthAdjust="spacingAndGlyphs">126.185</text>
<text x="686.3" y="338" fill="#fff" stroke="#fff" stroke-width="0.25" font-size="10.1" textLength="32.5" lengthAdjust="spacingAndGlyphs">126.020</text>
<text x="686.3" y="371" fill="#fff" stroke="#fff" stroke-width="0.25" font-size="10.1" textLength="32.5" lengthAdjust="spacingAndGlyphs">125.855</text>
<text x="686.4" y="97" fill="#000" stroke="#000" stroke-width="0.25" font-size="10.1" textLength="32.5" lengthAdjust="spacingAndGlyphs">127.224</text>
<text x="684.4" y="383" fill="#fff" stroke="#fff" stroke-width="0.25" font-size="10.1" textLength="15.0" lengthAdjust="spacingAndGlyphs">120</text>
<text x="683.4" y="394" fill="#fff" stroke="#fff" stroke-width="0.25" font-size="10.1" textLength="15.0" lengthAdjust="spacingAndGlyphs">100</text>
<text x="683.4" y="410" fill="#fff" stroke="#fff" stroke-width="0.25" font-size="10.1" textLength="10.0" lengthAdjust="spacingAndGlyphs">80</text>
<text x="683.4" y="434" fill="#fff" stroke="#fff" stroke-width="0.25" font-size="10.1" textLength="10.0" lengthAdjust="spacingAndGlyphs">50</text>
<text x="684.3" y="475" fill="#fff" stroke="#fff" stroke-width="0.25" font-size="10.1" textLength="17.5" lengthAdjust="spacingAndGlyphs">0.00</text>
<text x="683.5" y="515" fill="#fff" stroke="#fff" stroke-width="0.25" font-size="10.1" textLength="13.0" lengthAdjust="spacingAndGlyphs">-50</text>
<text x="683.5" y="539" fill="#fff" stroke="#fff" stroke-width="0.25" font-size="10.1" textLength="13.0" lengthAdjust="spacingAndGlyphs">-80</text>
<text x="684.3" y="549" fill="#fff" stroke="#fff" stroke-width="0.25" font-size="10.1" textLength="18.0" lengthAdjust="spacingAndGlyphs">-100</text>
<text x="11.2" y="565" fill="#fff" stroke="#fff" stroke-width="0.25" font-size="10.1" textLength="46.6" lengthAdjust="spacingAndGlyphs">8 Mar 2022</text>
<text x="75.4" y="565" fill="#fff" stroke="#fff" stroke-width="0.25" font-size="10.1" textLength="49.8" lengthAdjust="spacingAndGlyphs">9 Mar 00:25</text>
<text x="139.39999999999998" y="565" fill="#fff" stroke="#fff" stroke-width="0.25" font-size="10.1" textLength="49.8" lengthAdjust="spacingAndGlyphs">9 Mar 01:45</text>
<text x="203.39999999999998" y="565" fill="#fff" stroke="#fff" stroke-width="0.25" font-size="10.1" textLength="49.8" lengthAdjust="spacingAndGlyphs">9 Mar 03:05</text>
<text x="267.4" y="565" fill="#fff" stroke="#fff" stroke-width="0.25" font-size="10.1" textLength="49.8" lengthAdjust="spacingAndGlyphs">9 Mar 04:25</text>
<text x="331.4" y="565" fill="#fff" stroke="#fff" stroke-width="0.25" font-size="10.1" textLength="49.8" lengthAdjust="spacingAndGlyphs">9 Mar 05:45</text>
<text x="395.4" y="565" fill="#fff" stroke="#fff" stroke-width="0.25" font-size="10.1" textLength="49.8" lengthAdjust="spacingAndGlyphs">9 Mar 07:05</text>
<text x="459.4" y="565" fill="#fff" stroke="#fff" stroke-width="0.25" font-size="10.1" textLength="49.8" lengthAdjust="spacingAndGlyphs">9 Mar 08:25</text>
<text x="523.4000000000001" y="565" fill="#fff" stroke="#fff" stroke-width="0.25" font-size="10.1" textLength="49.8" lengthAdjust="spacingAndGlyphs">9 Mar 09:45</text>
<text x="587.4000000000001" y="565" fill="#fff" stroke="#fff" stroke-width="0.25" font-size="10.1" textLength="49.8" lengthAdjust="spacingAndGlyphs">9 Mar 11:05</text>
<text x="651.4000000000001" y="565" fill="#fff" stroke="#fff" stroke-width="0.25" font-size="10.1" textLength="49.8" lengthAdjust="spacingAndGlyphs">9 Mar 12:25</text>
</g>
</svg>
</body></html>
